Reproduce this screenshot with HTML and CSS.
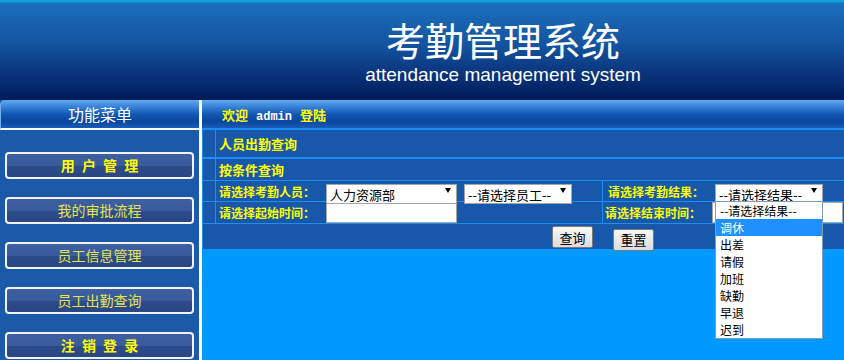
FILE: index.html
```html
<!DOCTYPE html>
<html lang="zh-CN">
<head>
    <meta charset="UTF-8">
    <meta name="viewport" content="width=device-width, initial-scale=1.0">
    <title>考勤管理系统</title>
    <link rel="stylesheet" href="styles.css">
</head>
<body>
    <div class="page">
        <header class="top">
            <h1 class="title">考勤管理系统</h1>
            <p class="subtitle">attendance management system</p>
        </header>

        <div class="layout">
            <!-- left menu -->
            <aside class="sidebar">
                <div class="side-title">功能菜单</div>
                <ul class="menu">
                    <li><a href="#" class="menu-btn strong">用 户 管 理</a></li>
                    <li><a href="#" class="menu-btn">我的审批流程</a></li>
                    <li><a href="#" class="menu-btn">员工信息管理</a></li>
                    <li><a href="#" class="menu-btn">员工出勤查询</a></li>
                    <li><a href="#" class="menu-btn strong">注 销 登 录</a></li>
                </ul>
            </aside>

            <main class="content">
                <div class="welcome">
                    <span>欢迎</span>
                    <b class="user">admin</b>
                    <span>登陆</span>
                </div>

                <form class="query">
                    <div class="q-row q-head">
                        <span class="gutter"></span>
                        <span class="q-title">人员出勤查询</span>
                    </div>
                    <div class="q-row q-sub">
                        <span class="gutter"></span>
                        <span class="q-title">按条件查询</span>
                    </div>

                    <div class="q-row q-field">
                        <span class="gutter"></span>
                        <label class="q-label">请选择考勤人员：</label>
                        <div class="q-ctrl split">
                            <span class="select-box w131">
                                <select>
                                    <option>人力资源部</option>
                                </select>
                            </span>
                            <span class="select-box w108">
                                <select>
                                    <option>--请选择员工--</option>
                                </select>
                            </span>
                        </div>
                        <label class="q-label right">请选择考勤结果：</label>
                        <div class="q-ctrl">
                            <span class="select-box w108">
                                <select>
                                    <option>--请选择结果--</option>
                                </select>
                                <!-- opened option list -->
                                <ul class="dropdown">
                                    <li>--请选择结果--</li>
                                    <li class="hl">调休</li>
                                    <li>出差</li>
                                    <li>请假</li>
                                    <li>加班</li>
                                    <li>缺勤</li>
                                    <li>早退</li>
                                    <li>迟到</li>
                                </ul>
                            </span>
                        </div>
                    </div>

                    <div class="q-row q-field q-time">
                        <span class="gutter"></span>
                        <label class="q-label">请选择起始时间：</label>
                        <div class="q-ctrl split">
                            <input type="text" class="text-input">
                        </div>
                        <label class="q-label right">请选择结束时间：</label>
                        <div class="q-ctrl">
                            <input type="text" class="text-input">
                        </div>
                    </div>

                    <div class="q-actions">
                        <div class="act-left"><button type="button" class="btn">查询</button></div>
                        <div class="act-right"><button type="reset" class="btn">重置</button></div>
                    </div>
                </form>
            </main>
        </div>
    </div>
</body>
</html>
```

FILE: styles.css
```css
* {
    box-sizing: border-box;
    margin: 0;
    padding: 0;
}

body {
    font-family: "Noto Sans CJK SC", sans-serif;
    background: #0099ff;
}

.page {
    height: 100vh;
    display: flex;
    flex-direction: column;
}

/* header */
.top {
    height: 100px;
    flex-shrink: 0;
    display: flex;
    flex-direction: column;
    align-items: center;
    padding: 19px 0 0 162px;
    color: #fff;
    background: linear-gradient(to bottom, #14a0dc 0, #14a0dc 2px, #1b6fbc 3px, #14539f 45%, #09337a 75%, #021a58 100%);
}

.title {
    font-size: 39px;
    font-weight: normal;
    line-height: 40px;
}

.subtitle {
    font-family: "Liberation Sans", Arial, sans-serif;
    font-size: 19px;
    line-height: 19px;
    margin-top: 6px;
}

.layout {
    flex: 1;
    display: flex;
}

/* left menu */
.sidebar {
    width: 202px;
    flex-shrink: 0;
    background: #1a5aa8;
    border-right: 3px solid #fff;
}

.side-title {
    height: 30px;
    border-bottom: 2px solid #fff;
    border-top-left-radius: 5px;
    border-left: 1px solid #6fb0f0;
    background: linear-gradient(to bottom, #64aaee 0%, #3a86da 22%, #1458b4 50%, #0a469e 76%, #1a5cb8 100%);
    color: #fff;
    font-size: 16px;
    line-height: 28px;
    text-align: center;
}

.menu {
    list-style: none;
    display: flex;
    flex-direction: column;
    gap: 18px;
    padding: 22px 5px 0 5px;
}

.menu-btn {
    display: block;
    height: 27px;
    border: 2px solid #f2f2f2;
    border-radius: 4px;
    background: linear-gradient(to bottom, #3d60a2 0%, #395a9b 50%, #2d4b8a 52%, #2a4684 100%);
    color: #e4e44e;
    font-size: 14px;
    line-height: 23px;
    text-align: center;
    text-decoration: none;
}

.menu-btn.strong {
    color: #ffff00;
    font-weight: bold;
    word-spacing: 4px;
}

/* main */
.content {
    flex: 1;
    background: #0099ff;
}

.welcome {
    height: 30px;
    display: flex;
    align-items: baseline;
    gap: 8px;
    padding: 5px 0 0 20px;
    border-bottom: 2px solid #1a8cf0;
    background: linear-gradient(to bottom, #64aaee 0%, #3a86da 22%, #1458b4 50%, #0a469e 76%, #1a5cb8 100%);
    color: #ffff00;
    font-size: 13px;
    font-weight: bold;
}

.user {
    font-family: "Liberation Mono", monospace;
    font-size: 12px;
    color: #fff;
}

.query {
    border-left: 1px solid #1e8ff0;
    background: #1858aa;
}

.q-row {
    display: grid;
    border-bottom: 1px solid #1e8ff0;
}

.q-row > * {
    display: flex;
    align-items: center;
}

.gutter {
    border-right: 1px solid #1e8ff0;
}

.q-head {
    grid-template-columns: 13px 1fr;
    height: 29px;
    border-bottom-width: 2px;
}

.q-sub {
    grid-template-columns: 13px 1fr;
    height: 22px;
}

.q-title {
    padding-left: 3px;
    color: #ffff00;
    font-size: 13px;
    font-weight: bold;
}

.q-field {
    grid-template-columns: 13px 110px 277px 112px 1fr;
    height: 21px;
}

.q-field.q-time {
    grid-template-columns: 13px 110px 277px 109px 1fr;
    height: 22px;
}

.q-label {
    padding-left: 3px;
    color: #ffff00;
    font-size: 12px;
    font-weight: bold;
    white-space: nowrap;
}

.q-label.right {
    padding-left: 5px;
}

.q-time .q-label.right {
    padding-left: 2px;
}

.q-ctrl {
    gap: 7px;
}

.q-ctrl.split {
    border-right: 1px solid #1e8ff0;
}

.select-box {
    position: relative;
    display: block;
    height: 20px;
}

.select-box::after {
    content: "";
    position: absolute;
    top: 7px;
    right: 6px;
    border-left: 3px solid transparent;
    border-right: 3px solid transparent;
    border-top: 5px solid #000;
    pointer-events: none;
}

.w131 {
    width: 131px;
}

.w108 {
    width: 108px;
}

.select-box select {
    appearance: none;
    -webkit-appearance: none;
    width: 100%;
    height: 20px;
    border: 1px solid #a5a5a5;
    border-radius: 0;
    background: #fff;
    padding: 0 14px 0 3px;
    font-family: "Noto Sans CJK SC", sans-serif;
    font-size: 13px;
    color: #000;
    outline: none;
}

.dropdown {
    position: absolute;
    top: 20px;
    left: 0;
    width: 108px;
    z-index: 5;
    list-style: none;
    border: 1px solid #7f9db9;
    background: #fff;
}

.dropdown li {
    height: 17px;
    line-height: 17px;
    padding-left: 4px;
    font-size: 12px;
    color: #000;
}

.dropdown li.hl {
    background: #1e90ff;
    color: #fff;
}

.text-input {
    width: 131px;
    height: 21px;
    border: 1px solid #a5a5a5;
    background: #fff;
    outline: none;
}

.q-actions {
    display: grid;
    grid-template-columns: 399px 1fr;
    height: 25px;
}

.act-left {
    display: flex;
    justify-content: flex-end;
    padding: 2px 9px 0 0;
}

.act-right {
    padding: 2px 0 0 11px;
}

.btn {
    width: 41px;
    height: 22px;
    border: 1px solid #7a7a7a;
    border-radius: 2px;
    background: linear-gradient(to bottom, #f8f8f8, #dcdcdc);
    font-family: "Noto Sans CJK SC", sans-serif;
    font-size: 13px;
    color: #000;
}
```
